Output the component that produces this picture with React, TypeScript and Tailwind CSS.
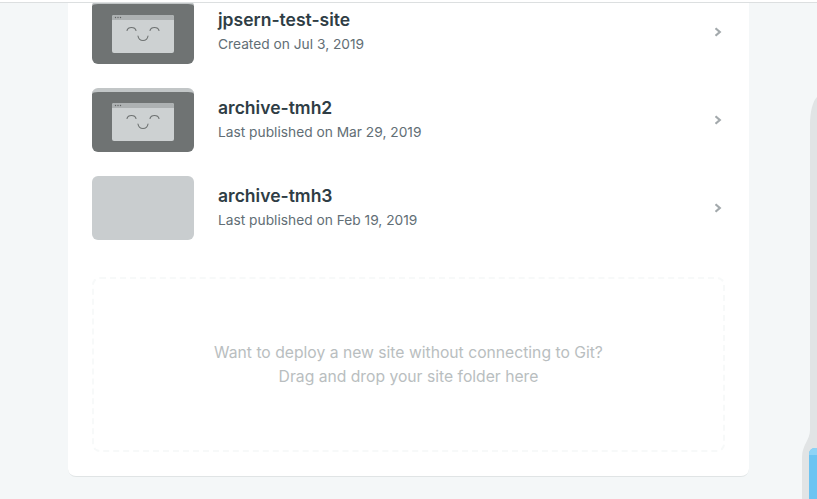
import React from "react";

interface Site {
  name: string;
  detail: string;
  preview: boolean;
}

const sites: Site[] = [
  { name: "jpsern-test-site", detail: "Created on Jul 3, 2019", preview: true },
  { name: "archive-tmh2", detail: "Last published on Mar 29, 2019", preview: true },
  { name: "archive-tmh3", detail: "Last published on Feb 19, 2019", preview: false },
];

function Thumb({ preview }: { preview: boolean }) {
  if (!preview) {
    return <div className="w-[102px] h-16 shrink-0 rounded-md bg-[#c9cdcf]" />;
  }
  return (
    <div className="w-[102px] h-16 shrink-0 rounded-md overflow-hidden bg-[#6f7373] border-t-4 border-[#c2c6c7] flex items-center justify-center">
      <svg width="62" height="38" viewBox="0 0 62 38" fill="none">
        <rect width="62" height="38" rx="2" fill="#cdd1d2" />
        <path d="M0 2a2 2 0 0 1 2-2h58a2 2 0 0 1 2 2v3H0z" fill="#adb1b2" />
        <circle cx="3.5" cy="2.5" r="0.7" fill="#5f6363" />
        <circle cx="6" cy="2.5" r="0.7" fill="#5f6363" />
        <circle cx="8.5" cy="2.5" r="0.7" fill="#5f6363" />
        <path d="M15 15.5c1-4 8-4 9 0M38 15.5c1-4 8-4 9 0M26 21c1 6 9 6 10 0" stroke="#6f7373" strokeWidth="1.1" strokeLinecap="round" />
      </svg>
    </div>
  );
}

function SiteRow({ site }: { site: Site }) {
  return (
    <div className="flex items-center">
      <Thumb preview={site.preview} />
      <div className="ml-6 flex-1">
        <div className="text-[17.55px] font-semibold leading-6 text-[#2f3d45]">{site.name}</div>
        <div className="text-[13.75px] leading-6 text-[#626e75]">{site.detail}</div>
      </div>
      <svg className="mr-[3px]" width="8" height="10" viewBox="0 0 8 10" fill="none">
        <path d="M1.5 1.2L5.8 5L1.5 8.8" stroke="#a3a9ac" strokeWidth="2.2" />
      </svg>
    </div>
  );
}

export default function App() {
  return (
    <div className="relative h-[499px] overflow-hidden bg-[#f4f7f8] font-['Inter','Noto_Sans',sans-serif]">
      <div className="h-[3px] bg-white border-b border-[#dcdfe0]" />

      <div className="ml-[68px] w-[681px] h-[474px] rounded-b-lg bg-white border-b border-[#e0e4e5] px-6 overflow-hidden">
        <div className="-mt-[3px] flex flex-col gap-6">
          {sites.map((site) => (
            <SiteRow key={site.name} site={site} />
          ))}
        </div>

        <div className="mt-[37px] h-[175px] rounded-lg border-2 border-dashed border-[#f7f9f9] flex flex-col items-center justify-center text-[15.7px] leading-6 text-[#b9bec0]">
          <p>Want to deploy a new site without connecting to Git?</p>
          <p>Drag and drop your site folder here</p>
        </div>
      </div>

      {/* Edge of the next panel, peeking in at the right */}
      <svg className="absolute left-[800px] top-[95px]" width="17" height="404" viewBox="0 0 17 404">
        <path d="M17 2C13 6 10 16 10 30V335C10 345 2 350 2 362V404H17z" fill="#e1e4e5" />
        <path d="M9 360a6 6 0 0 1 6-7h2v51H9z" fill="#6cc4f2" />
        <path d="M9 360a6 6 0 0 1 6-7h2v7z" fill="#8ed3f6" />
      </svg>
    </div>
  );
}
